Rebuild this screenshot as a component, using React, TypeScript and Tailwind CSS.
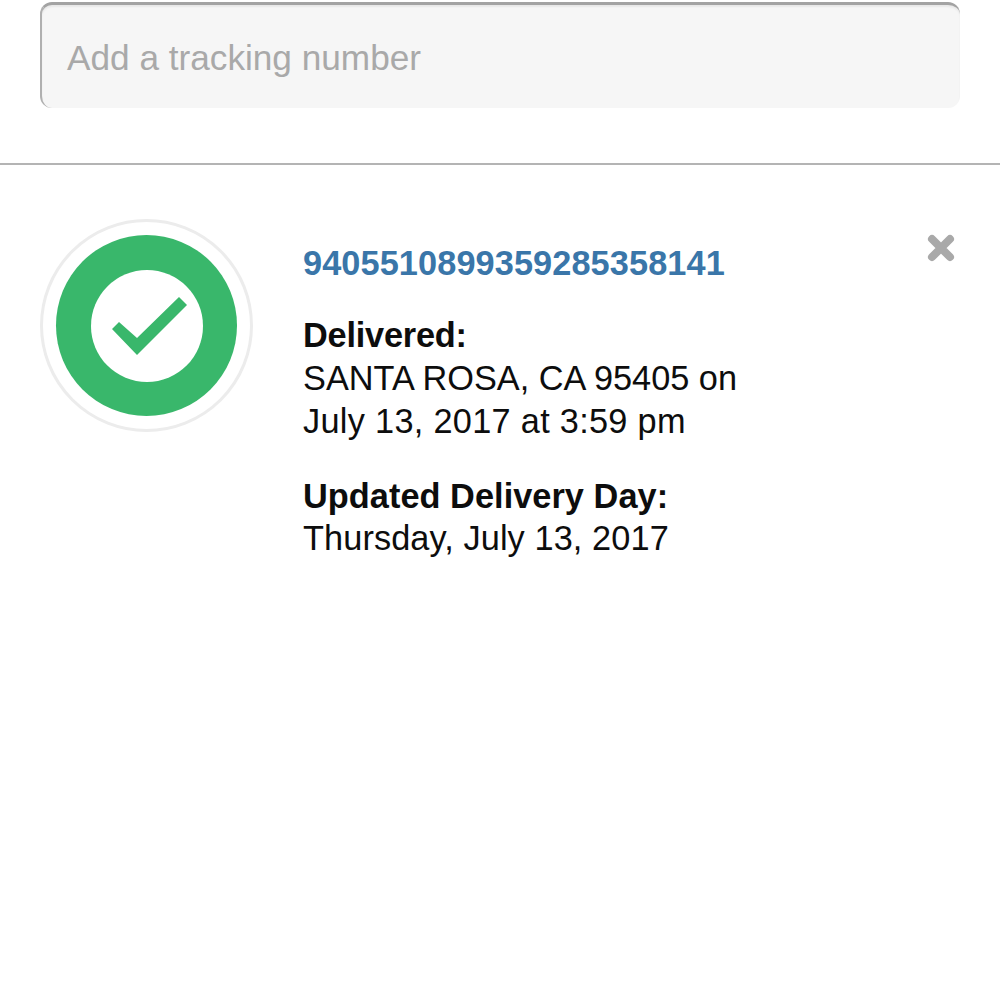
export default function App() {
  return (
    <div className="h-[1000px] w-[1000px] overflow-hidden bg-white font-['Liberation_Sans',Arial,sans-serif] text-[#0d0d0d]">
      <div className="h-[163px] px-10 pt-[2px]">
        <div className="flex h-[106px] items-center rounded-[12px] border-t-[3px] border-l-[2px] border-t-[#a3a3a3] border-l-[#b0b0b0] bg-[#f6f6f6] pl-[25px] pt-[4px] text-[35.2px] text-[#a9a9a9] shadow-[inset_0_2px_2px_rgba(0,0,0,0.06)]">
          Add a tracking number
        </div>
      </div>
      <div className="h-[2px] bg-[#b4b4b4]" />

      <div className="flex pl-10 pr-[45px] pt-[54px]">
        <div className="flex h-[213px] w-[213px] shrink-0 items-center justify-center rounded-full border-[3px] border-[#ececec]">
          <div className="flex h-[181px] w-[181px] items-center justify-center rounded-full bg-[#39b76b]">
            <div className="h-[112px] w-[112px] rounded-full bg-white">
              <svg width="112" height="112" viewBox="0 0 112 112">
                <polygon points="21,59 28,52 46,68 88,27 96,35 46,85" fill="#39b76b" />
              </svg>
            </div>
          </div>
        </div>

        <div className="ml-[50px] flex-1 pt-[23px] text-[34.3px] leading-[43px]">
          <div className="font-bold tracking-[0.1px] text-[#3a76a9]">9405510899359285358141</div>
          <div className="mt-[29px]">
            <div className="font-bold tracking-[-0.2px]">Delivered:</div>
            <div>SANTA ROSA, CA 95405 on</div>
            <div className="tracking-[0.3px]">July 13, 2017 at 3:59 pm</div>
          </div>
          <div className="mt-[32px]">
            <div className="font-bold tracking-[0.05px]">Updated Delivery Day:</div>
            <div className="-mt-[1px] tracking-[0.1px]">Thursday, July 13, 2017</div>
          </div>
        </div>

        <svg width="28" height="28" viewBox="0 0 28 28" className="mt-[15px]">
          <path d="M5 5 L23 23 M23 5 L5 23" stroke="#a9a9a9" strokeWidth="8" strokeLinecap="round" />
        </svg>
      </div>
    </div>
  );
}
